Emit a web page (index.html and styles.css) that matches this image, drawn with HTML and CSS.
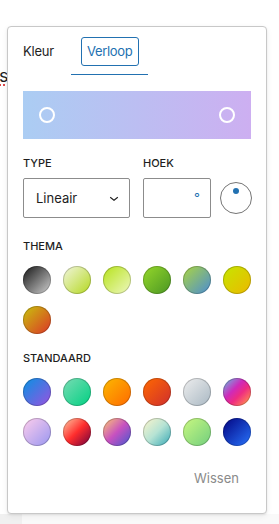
FILE: index.html
```html
<!DOCTYPE html>
<html lang="nl">
<head>
  <meta charset="UTF-8" />
  <meta name="viewport" content="width=device-width, initial-scale=1.0" />
  <title>Verloop kiezen</title>
  <link rel="stylesheet" href="styles.css">
</head>
<body>

  <!-- Page behind the popover -->
  <main class="page">
    <p class="page-text"><span class="misspelled">s</span></p>
    <div class="page-foot">
      <div class="page-foot-side"></div>
      <div class="page-foot-main"></div>
    </div>
  </main>

  <!-- Colour popover -->
  <div class="popover">
    <div class="tabs">
      <button class="tab">Kleur</button>
      <button class="tab is-active">Verloop</button>
    </div>

    <div class="panel">
      <div class="gradient-bar">
        <span class="handle handle-start"></span>
        <span class="handle handle-end"></span>
      </div>

      <div class="controls">
        <div class="field field-type">
          <div class="label">Type</div>
          <div class="select">
            <span>Lineair</span>
            <svg class="chevron" viewBox="0 0 24 24" width="18" height="18"><path d="M17.5 11.6L12 16l-5.5-4.4.9-1.2L12 14l4.6-3.6 1 1.2z"/></svg>
          </div>
        </div>
        <div class="field field-angle">
          <div class="label">Hoek</div>
          <div class="angle-row">
            <div class="angle-input"><span class="degree">°</span></div>
            <div class="dial"><span class="dial-dot"></span></div>
          </div>
        </div>
      </div>

      <div class="label section-label section-theme">Thema</div>
      <div class="swatches">
        <span class="swatch" style="background: linear-gradient(135deg, #141414 0%, #d2d2d2 100%)"></span>
        <span class="swatch" style="background: linear-gradient(135deg, #f2f6e0 0%, #b4d81e 100%)"></span>
        <span class="swatch" style="background: linear-gradient(135deg, #b6e21a 0%, #eef8c0 100%)"></span>
        <span class="swatch" style="background: linear-gradient(135deg, #96d82a 0%, #4a9624 100%)"></span>
        <span class="swatch" style="background: linear-gradient(135deg, #acd640 0%, #4a8cd4 100%)"></span>
        <span class="swatch" style="background: linear-gradient(135deg, #c6e600 0%, #ecb800 100%)"></span>
        <span class="swatch" style="background: linear-gradient(135deg, #c8c40c 0%, #dc3428 100%)"></span>
      </div>

      <div class="label section-label section-default">Standaard</div>
      <div class="swatches">
        <span class="swatch" style="background: linear-gradient(135deg, rgb(6,147,227) 0%, rgb(155,81,224) 100%)"></span>
        <span class="swatch" style="background: linear-gradient(135deg, rgb(122,220,180) 0%, rgb(0,208,130) 100%)"></span>
        <span class="swatch" style="background: linear-gradient(135deg, rgb(252,185,0) 0%, rgb(255,105,0) 100%)"></span>
        <span class="swatch" style="background: linear-gradient(135deg, rgb(255,105,0) 0%, rgb(207,46,46) 100%)"></span>
        <span class="swatch" style="background: linear-gradient(135deg, rgb(238,238,238) 0%, rgb(169,184,195) 100%)"></span>
        <span class="swatch" style="background: linear-gradient(135deg, rgb(74,234,220) 0%, rgb(151,120,209) 20%, rgb(207,42,186) 40%, rgb(238,44,130) 60%, rgb(251,105,98) 80%, rgb(254,248,76) 100%)"></span>
        <span class="swatch" style="background: linear-gradient(135deg, rgb(255,206,236) 0%, rgb(152,150,240) 100%)"></span>
        <span class="swatch" style="background: linear-gradient(135deg, rgb(254,205,165) 0%, rgb(254,45,45) 50%, rgb(107,0,62) 100%)"></span>
        <span class="swatch" style="background: linear-gradient(135deg, rgb(255,203,112) 0%, rgb(199,81,192) 50%, rgb(65,88,208) 100%)"></span>
        <span class="swatch" style="background: linear-gradient(135deg, rgb(255,245,203) 0%, rgb(182,227,212) 50%, rgb(51,167,181) 100%)"></span>
        <span class="swatch" style="background: linear-gradient(135deg, rgb(202,248,128) 0%, rgb(113,206,126) 100%)"></span>
        <span class="swatch" style="background: linear-gradient(135deg, rgb(2,3,129) 0%, rgb(40,116,252) 100%)"></span>
      </div>

      <div class="actions">
        <button class="clear-btn">Wissen</button>
      </div>
    </div>
  </div>

</body>
</html>
```

FILE: styles.css
```css
* {
  margin: 0;
  padding: 0;
  box-sizing: border-box;
  font-family: Inter, 'Noto Sans', sans-serif;
}

body {
  background: #fff;
  color: #1e1e1e;
  font-size: 13px;
  width: 279px;
  height: 524px;
  overflow: hidden;
}

button {
  background: none;
  border: 0;
  font-size: 13px;
  color: inherit;
  cursor: pointer;
}

/* ========== Page behind ========== */
.page {
  height: 524px;
  display: flex;
  flex-direction: column;
}

.page-text {
  padding-top: 64px;
  font-size: 18px;
  line-height: 24px;
  margin-left: -1px;
}

.misspelled {
  text-decoration: underline dotted #d63638;
  text-underline-offset: 3px;
}

.page-foot {
  margin-top: auto;
  height: 10px;
  display: flex;
}

.page-foot-side {
  width: 22px;
  background: #f0f0f0;
}

.page-foot-main {
  flex: 1;
  background: #f9f9f9;
}

/* ========== Popover ========== */
.popover {
  position: absolute;
  top: 26px;
  left: 7px;
  width: 260px;
  height: 488px;
  background: #fff;
  border: 1px solid #c8c8c8;
  border-radius: 4px;
  box-shadow: 0 1px 2px rgba(0, 0, 0, 0.08), 0 2px 6px rgba(0, 0, 0, 0.06);
}

.tabs {
  display: flex;
  height: 48px;
}

.tab {
  position: relative;
  height: 48px;
  padding: 0 16px;
  color: #1e1e1e;
  letter-spacing: -0.2px;
}

.tab:first-child {
  padding: 0 17px 0 15px;
}

.tab.is-active {
  color: #2271b1;
  letter-spacing: -0.35px;
}

.tab.is-active::before {
  content: '';
  position: absolute;
  top: 10px;
  bottom: 9px;
  left: 10px;
  right: 9px;
  border: 1.5px solid #2271b1;
  border-radius: 3px;
}

.tab.is-active::after {
  content: '';
  position: absolute;
  left: 0;
  right: 0;
  bottom: 0;
  height: 1.5px;
  background: #2271b1;
}

.panel {
  padding: 16px 15px 0;
}

.gradient-bar {
  position: relative;
  height: 48px;
  background: linear-gradient(90deg, #abcdf3 0%, #cdaff1 100%);
}

.handle {
  position: absolute;
  top: 16px;
  width: 16px;
  height: 16px;
  border: 2px solid #fff;
  border-radius: 50%;
}

.handle-start { left: 16px; }
.handle-end { right: 16px; }

/* ========== Type / angle ========== */
.controls {
  display: flex;
  gap: 13px;
  margin-top: 16px;
}

.label {
  font-size: 11px;
  font-weight: 500;
  line-height: 16px;
  text-transform: uppercase;
  color: #1e1e1e;
  margin-bottom: 7px;
}

.select {
  width: 107px;
  height: 40px;
  border: 1px solid #8c8c8c;
  border-radius: 2px;
  display: flex;
  align-items: center;
  justify-content: space-between;
  padding: 0 6px 0 12px;
  font-size: 13px;
}

.chevron {
  fill: #1e1e1e;
}

.angle-row {
  display: flex;
  align-items: center;
  gap: 9px;
}

.angle-input {
  width: 68px;
  height: 40px;
  border: 1px solid #8c8c8c;
  border-radius: 2px;
  display: flex;
  align-items: center;
  justify-content: flex-end;
  padding-right: 10px;
}

.degree {
  color: #2271b1;
  font-size: 13px;
  line-height: 1;
}

.dial {
  width: 32px;
  height: 32px;
  border: 1px solid #757575;
  border-radius: 50%;
  display: flex;
  justify-content: center;
  padding-top: 5px;
}

.dial-dot {
  width: 6px;
  height: 6px;
  border-radius: 50%;
  background: #2271b1;
}

/* ========== Swatches ========== */
.section-label {
  margin-bottom: 12px;
}

.section-theme {
  margin-top: 20px;
}

.section-default {
  margin-top: 16px;
}

.swatches {
  display: grid;
  grid-template-columns: repeat(6, 28px);
  gap: 12px;
}

.swatch {
  width: 28px;
  height: 28px;
  border-radius: 50%;
  position: relative;
}

.swatch::after {
  content: '';
  position: absolute;
  inset: 0;
  border-radius: 50%;
  box-shadow: inset 0 0 0 1px rgba(0, 0, 0, 0.2);
}

.actions {
  display: flex;
  justify-content: flex-end;
  margin-top: 16px;
}

.clear-btn {
  height: 32px;
  padding: 0 12px;
  color: #8a8a8a;
}
```
